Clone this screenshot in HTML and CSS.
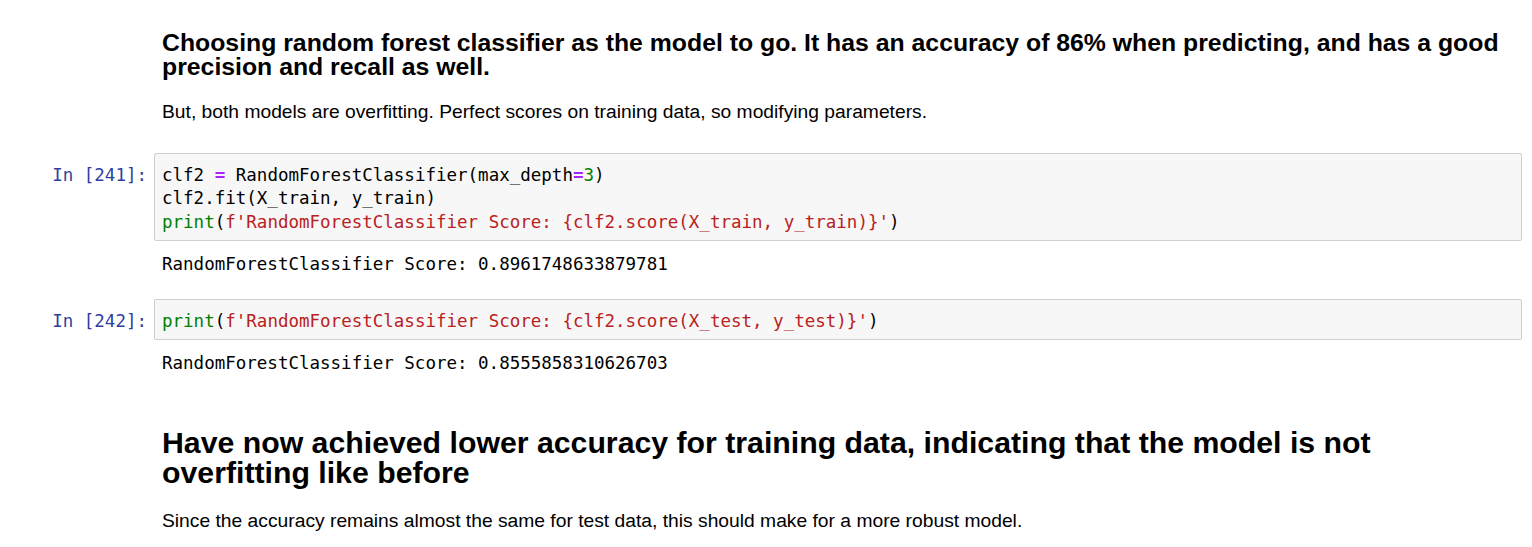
FILE: index.html
```html
<!DOCTYPE html>
<html>
<head>
<meta charset="utf-8">
<link rel="stylesheet" href="styles.css">
</head>
<body>
<div class="notebook">
  <div class="cell md md-first">
    <div class="prompt"></div>
    <div class="md-body">
      <h3 class="h3">Choosing random forest classifier as the model to go. It has an accuracy of 86% when predicting, and has a good precision and recall as well.</h3>
      <p class="para">But, both models are overfitting. Perfect scores on training data, so modifying parameters.</p>
    </div>
  </div>

  <div class="cell code cell-241">
    <div class="prompt in">In&nbsp;[241]:</div>
    <div class="input"><pre class="src">clf2 <span class="op">=</span> RandomForestClassifier(max_depth<span class="op">=</span><span class="num">3</span>)
clf2.fit(X_train, y_train)
<span class="bi">print</span>(<span class="str">f'RandomForestClassifier Score: {clf2.score(X_train, y_train)}'</span>)</pre></div>
  </div>
  <div class="cell out out-241">
    <div class="prompt"></div>
    <pre class="output">RandomForestClassifier Score: 0.8961748633879781</pre>
  </div>

  <div class="cell code cell-242">
    <div class="prompt in">In&nbsp;[242]:</div>
    <div class="input"><pre class="src"><span class="bi">print</span>(<span class="str">f'RandomForestClassifier Score: {clf2.score(X_test, y_test)}'</span>)</pre></div>
  </div>
  <div class="cell out out-242">
    <div class="prompt"></div>
    <pre class="output">RandomForestClassifier Score: 0.8555858310626703</pre>
  </div>

  <div class="cell md md-second">
    <div class="prompt"></div>
    <div class="md-body">
      <h2 class="h2">Have now achieved lower accuracy for training data, indicating that the model is not overfitting like before</h2>
      <p class="para">Since the accuracy remains almost the same for test data, this should make for a more robust model.</p>
    </div>
  </div>
</div>
</body>
</html>
```

FILE: styles.css
```css
html, body {
  margin: 0;
  padding: 0;
  background: #ffffff;
}
body {
  font-family: "Liberation Sans", Arial, sans-serif;
  color: #000;
}
.notebook {
  display: flex;
  flex-direction: column;
  padding-right: 10px;
}
.cell {
  display: flex;
  flex-direction: row;
  align-items: flex-start;
}
.prompt {
  flex: 0 0 154px;
  width: 154px;
  box-sizing: border-box;
  padding-right: 7px;
  text-align: right;
  font-family: "DejaVu Sans Mono", monospace;
  font-size: 17.5px;
  line-height: 23.5px;
}
.prompt.in {
  color: #303f9f;
  padding-top: 10.5px;
}
.md-body {
  flex: 1;
  padding-left: 8px;
}
.h3 {
  margin: 0;
  font-size: 24.8px;
  line-height: 24px;
  font-weight: bold;
}
.h2 {
  margin: 0;
  font-size: 30.25px;
  line-height: 30px;
  font-weight: bold;
}
.para {
  margin: 22px 0 0 0;
  font-size: 19.25px;
  line-height: 22px;
}
.md-first { margin-top: 31px; }
.cell-241 { margin-top: 30px; }
.cell-242 { margin-top: 23px; }
.md-second { margin-top: 53px; }

.input {
  flex: 1;
  background: #f7f7f7;
  border: 1px solid #cfcfcf;
  border-radius: 2px;
}
.src, .output {
  margin: 0;
  font-family: "DejaVu Sans Mono", monospace;
  font-size: 17.5px;
  line-height: 23.5px;
  color: #000;
}
.src {
  padding: 9.5px 7px 5.5px 7px;
}
.output {
  flex: 1;
  padding: 12px 8px 0 8px;
}
.op { color: #aa22ff; font-weight: bold; }
.num { color: #008000; }
.bi { color: #008000; }
.str { color: #ba2121; }
```
